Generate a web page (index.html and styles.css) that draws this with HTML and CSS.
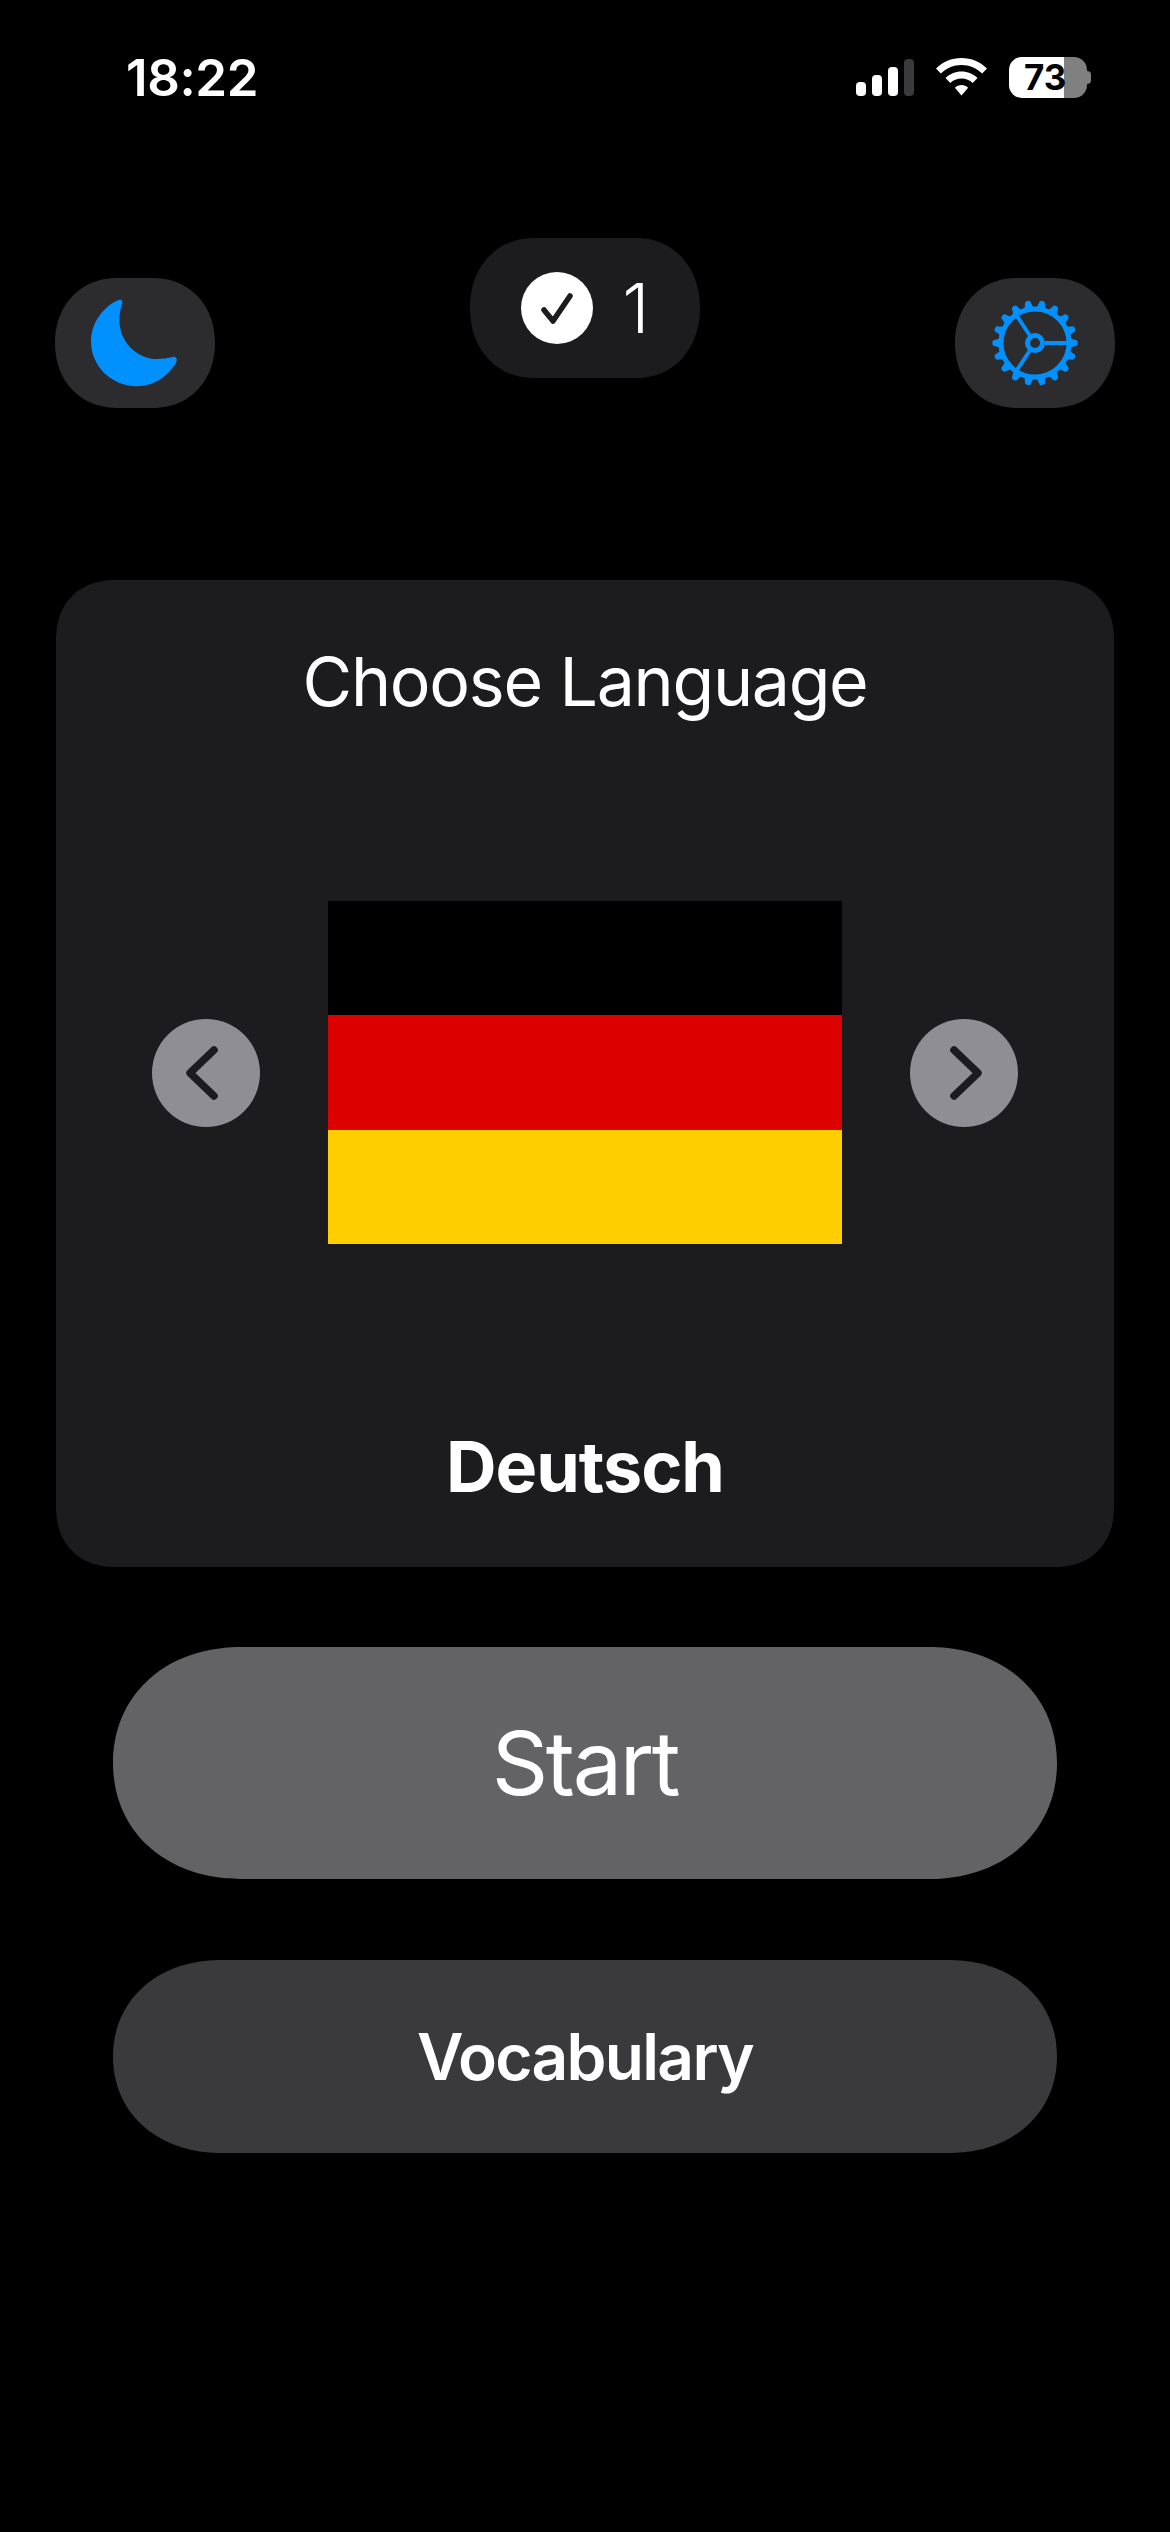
FILE: index.html
```html
<!doctype html>
<html>
  <head>
    <meta charset="utf-8">
    <title>Choose Language</title>
    <link rel="stylesheet" href="styles.css">
  </head>
  <body>
    <div class="status">
      <span class="time">18:22</span>
      <div class="status-icons">
        <div class="signal">
          <i class="bar bar1"></i><i class="bar bar2"></i><i class="bar bar3"></i><i class="bar bar4"></i>
        </div>
        <svg class="wifi" width="51" height="38" viewBox="0 0 51 38">
          <path d="M25.500 0C15.500 0 6.700 4 0 10.500L4.800 15.600C10.300 10.200 17.500 7 25.500 7S40.700 10.200 46.200 15.600L51 10.500C44.300 4 35.500 0 25.500 0Z" fill="#fff"/>
          <path d="M25.500 13.500C19.300 13.500 13.700 16 9.500 20L14.300 25C17.200 22.200 21.100 20.500 25.500 20.500S33.800 22.200 36.700 25L41.500 20C37.300 16 31.700 13.500 25.500 13.500Z" fill="#fff"/>
          <path d="M25.500 27C23 27 20.600 28 18.900 29.700L25.500 37.500L32.100 29.700C30.400 28 28 27 25.500 27Z" fill="#fff"/>
        </svg>
        <div class="battery">
          <div class="battery-body"><span>73</span></div>
          <i class="battery-tip"></i>
        </div>
      </div>
    </div>

    <div class="top">
      <button class="round-btn">
        <svg width="160" height="130" viewBox="45 55 480 390">
          <path d="M236 121C190 140 153 190 153 245C153 320 215 380 290 380C345 380 390 345 410 305C413 296 405 290 398 292C385 296 365 298 350 298C290 298 238 245 238 180C238 165 242 145 247 130C249 122 243 118 236 121Z" fill="#0091ff"/>
        </svg>
      </button>
      <div class="score">
        <svg class="score-check" width="72" height="72" viewBox="0 0 72 72">
          <circle cx="36" cy="36" r="36" fill="#fff"/>
          <path d="M23 38L32 49L49 24" fill="none" stroke="#1c1c1e" stroke-width="5.500" stroke-linecap="round" stroke-linejoin="round"/>
        </svg>
        <span class="score-num">1</span>
      </div>
      <button class="round-btn">
        <svg width="160" height="130" viewBox="-80 -65 160 130">
          <defs>
            <path id="tooth" d="M34 -5L39.500 -3.200A3 3 0 0 1 39.500 3.200L34 5Z" fill="#0091ff"/>
          </defs>
          <use href="#tooth"/>
          <use href="#tooth" transform="rotate(20)"/>
          <use href="#tooth" transform="rotate(40)"/>
          <use href="#tooth" transform="rotate(60)"/>
          <use href="#tooth" transform="rotate(80)"/>
          <use href="#tooth" transform="rotate(100)"/>
          <use href="#tooth" transform="rotate(120)"/>
          <use href="#tooth" transform="rotate(140)"/>
          <use href="#tooth" transform="rotate(160)"/>
          <use href="#tooth" transform="rotate(180)"/>
          <use href="#tooth" transform="rotate(200)"/>
          <use href="#tooth" transform="rotate(220)"/>
          <use href="#tooth" transform="rotate(240)"/>
          <use href="#tooth" transform="rotate(260)"/>
          <use href="#tooth" transform="rotate(280)"/>
          <use href="#tooth" transform="rotate(300)"/>
          <use href="#tooth" transform="rotate(320)"/>
          <use href="#tooth" transform="rotate(340)"/>
          <circle r="34" fill="none" stroke="#0091ff" stroke-width="5"/>
          <circle r="7.500" fill="none" stroke="#0091ff" stroke-width="5"/>
          <path d="M10 0H33M-5.500 -8L-18 -27M-5.500 8L-18 27" fill="none" stroke="#0091ff" stroke-width="4"/>
        </svg>
      </button>
    </div>

    <div class="card">
      <h1 class="card-title">Choose Language</h1>
      <div class="carousel">
        <button class="arrow">
          <svg width="108" height="108" viewBox="0 0 108 108">
            <path d="M62 31L38 54L62 77" fill="none" stroke="#1c1c1e" stroke-width="7.500" stroke-linecap="round" stroke-linejoin="round"/>
          </svg>
        </button>
        <div class="flag">
          <div class="stripe black"></div>
          <div class="stripe red"></div>
          <div class="stripe gold"></div>
        </div>
        <button class="arrow">
          <svg width="108" height="108" viewBox="0 0 108 108">
            <path d="M44 31L68 54L44 77" fill="none" stroke="#1c1c1e" stroke-width="7.500" stroke-linecap="round" stroke-linejoin="round"/>
          </svg>
        </button>
      </div>
      <div class="lang-name">Deutsch</div>
    </div>

    <button class="btn btn-start">Start</button>
    <button class="btn btn-vocab">Vocabulary</button>
  </body>
</html>
```

FILE: styles.css
```css
html {
  background-color: #000;
}
body {
  margin: 0;
  width: 1170px;
  height: 2532px;
  overflow: hidden;
  background-color: #000;
  color: #fff;
  font-family: Inter, "Liberation Sans", sans-serif;
}
button {
  border: 0;
  padding: 0;
  margin: 0;
  color: #fff;
  font-family: inherit;
}

.status {
  height: 154px;
  padding: 0 79px 0 126px;
  display: flex;
  justify-content: space-between;
  align-items: center;
}
.time {
  font-size: 51px;
  font-weight: 600;
  letter-spacing: -0.4px;
}
.status-icons {
  display: flex;
  align-items: center;
  gap: 22px;
}
.signal {
  display: flex;
  align-items: flex-end;
  gap: 6px;
  height: 37px;
}
.bar {
  width: 10px;
  background-color: #fff;
  border-radius: 4px;
}
.bar1 { height: 14px; }
.bar2 { height: 21px; }
.bar3 { height: 29px; }
.bar4 { height: 37px; background-color: #3a3a3c; }

.battery {
  display: flex;
  align-items: center;
}
.battery-body {
  width: 78px;
  height: 41px;
  box-sizing: border-box;
  padding-left: 15px;
  border-radius: 13px;
  background: linear-gradient(to right, #fff 55px, #808080 55px);
  color: #000;
  font-size: 35px;
  font-weight: 700;
  line-height: 41px;
}
.battery-tip {
  width: 4px;
  height: 13px;
  background-color: #808080;
  border-radius: 0 6px 6px 0;
}

.top {
  height: 170px;
  margin-top: 84px;
  padding: 0 55px;
  display: flex;
  justify-content: space-between;
  align-items: flex-start;
}
.round-btn {
  width: 160px;
  height: 130px;
  margin-top: 40px;
  border-radius: 62px / 65px;
  corner-shape: superellipse(1.08);
  background-color: #2c2c2e;
  display: block;
}
.round-btn svg {
  display: block;
}
.score {
  width: 230px;
  height: 140px;
  border-radius: 64px / 70px;
  corner-shape: superellipse(1.08);
  background-color: #1c1c1e;
  display: flex;
  align-items: center;
  justify-content: center;
  gap: 30px;
}
.score-num {
  font-size: 68px;
  font-weight: 300;
}

.card {
  margin: 172px 56px 0;
  height: 987px;
  box-sizing: border-box;
  padding-top: 59px;
  border-radius: 60px;
  corner-shape: superellipse(1.15);
  background-color: #1c1c1e;
  text-align: center;
}
.card-title {
  margin: 0;
  font-size: 68px;
  line-height: 84px;
  font-weight: 400;
  letter-spacing: -1.3px;
}
.carousel {
  margin-top: 178px;
  display: flex;
  justify-content: center;
  align-items: center;
  gap: 68px;
}
.arrow {
  width: 108px;
  height: 108px;
  border-radius: 50%;
  background-color: #8e8e93;
}
.arrow svg {
  display: block;
}
.flag {
  width: 514px;
  height: 343px;
  display: flex;
  flex-direction: column;
}
.stripe {
  flex: 1;
}
.black { background-color: #000; }
.red { background-color: #dd0000; }
.gold { background-color: #ffce00; }
.lang-name {
  margin-top: 181px;
  font-size: 70px;
  line-height: 84px;
  font-weight: 700;
  letter-spacing: -1px;
}

.btn {
  display: block;
  width: 944px;
  margin-left: 113px;
  corner-shape: superellipse(1.08);
}
.btn-start {
  margin-top: 80px;
  height: 232px;
  border-radius: 128px / 116px;
  background-color: #636366;
  font-size: 88px;
  font-weight: 400;
  letter-spacing: -2.4px;
}
.btn-vocab {
  margin-top: 81px;
  height: 193px;
  border-radius: 108px / 96.500px;
  background-color: #3a3a3c;
  font-size: 64px;
  font-weight: 600;
  letter-spacing: -1.7px;
}
```
